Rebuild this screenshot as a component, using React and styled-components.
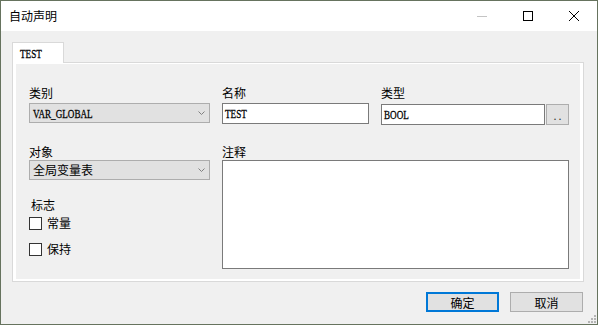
import styled, { createGlobalStyle } from 'styled-components';

const GlobalStyle = createGlobalStyle`
  html, body {
    margin: 0;
    padding: 0;
    background: #fff;
  }
  body {
    font-family: "Noto Sans CJK SC", "Liberation Sans", sans-serif;
    font-size: 12px;
    color: #000;
  }
`;

// SimSun-like narrow serif latin
const Latin = styled.span`
  display: inline-block;
  font-family: "Liberation Serif", serif;
  font-size: 12px;
  color: #000;
  -webkit-text-stroke: 0.3px #000;
  transform: scaleX(0.76);
  transform-origin: left center;
  white-space: nowrap;
`;

const Window = styled.div`
  position: relative;
  width: 598px;
  height: 325px;
  box-sizing: border-box;
  border: 1px solid #66735e;
  display: flex;
  flex-direction: column;
  background: #f0f0f0;
`;

const TitleBar = styled.div`
  height: 30px;
  flex-shrink: 0;
  background: #fff;
  display: flex;
  align-items: center;
  padding-left: 8px;
`;

const Title = styled.span`
  flex: 1;
  font-size: 12px;
  line-height: 16px;
`;

const WinButton = styled.div`
  width: 46px;
  height: 30px;
  display: flex;
  align-items: center;
  justify-content: center;
`;

const Body = styled.div`
  flex: 1;
  display: flex;
  flex-direction: column;
  padding: 11px 13px 0 11px;
`;

const TabStrip = styled.div`
  display: flex;
`;

const Tab = styled.div`
  position: relative;
  z-index: 1;
  width: 52px;
  height: 21px;
  margin-bottom: -1px;
  box-sizing: border-box;
  background: #fff;
  border: 1px solid #d9d9d9;
  border-bottom: none;
  padding-left: 7px;
  line-height: 19px;
`;

const Panel = styled.div`
  height: 220px;
  box-sizing: border-box;
  border: 1px solid #d9d9d9;
  background: #fff;
  padding: 1px 3px 2px 3px;
`;

const PanelInner = styled.div`
  height: 100%;
  box-sizing: border-box;
  background: #f0f0f0;
  padding: 21px 0 0 13px;
  display: grid;
  grid-template-columns: 181px 147px 188px;
  grid-template-rows: auto 1fr;
  column-gap: 12px;
  row-gap: 19px;
  align-items: start;
`;

const Field = styled.div`
  display: flex;
  flex-direction: column;
  grid-column: ${p => p.$span ? `span ${p.$span}` : 'auto'};
`;

const Label = styled.div`
  line-height: 16px;
  margin-top: ${p => p.$top || 0}px;
  margin-bottom: ${p => p.$gap ?? 2}px;
  padding-left: ${p => p.$indent || 0}px;
`;

const Combo = styled.div`
  height: 20px;
  box-sizing: border-box;
  background: #e1e1e1;
  border: 1px solid #adadad;
  display: flex;
  align-items: center;
  padding: 0 4px 0 3px;
  font-size: 12px;
  line-height: 18px;
  & > span:first-child { flex: 1; }
`;

const TextBox = styled.div`
  flex: 1;
  height: ${p => p.$tall ? 21 : 20}px;
  box-sizing: border-box;
  background: #fff;
  border: 1px solid #7a7a7a;
  padding-left: 2px;
  line-height: 18px;
`;

const InputRow = styled.div`
  display: flex;
  gap: 1px;
  margin-top: 1px;
`;

const DotsButton = styled.div`
  width: 23px;
  height: 21px;
  box-sizing: border-box;
  background: #e1e1e1;
  border: 1px solid #adadad;
  font-family: "Liberation Serif", serif;
  font-size: 12px;
  letter-spacing: 2px;
  padding-left: 2px;
  line-height: 22px;
  text-align: center;
  color: #333;
`;

const TextArea = styled.div`
  height: 109px;
  box-sizing: border-box;
  background: #fff;
  border: 1px solid #7a7a7a;
`;

const Column = styled.div`
  display: flex;
  flex-direction: column;
`;

const CheckRow = styled.div`
  display: flex;
  align-items: center;
  gap: 5px;
  height: 16px;
  line-height: 16px;
  margin-top: ${p => p.$top}px;
`;

const CheckBox = styled.div`
  width: 13px;
  height: 13px;
  box-sizing: border-box;
  border: 1px solid #333;
  background: #fff;
`;

const Footer = styled.div`
  display: flex;
  justify-content: flex-end;
  gap: 11px;
  margin-top: 10px;
  padding-right: 1px;
`;

const Button = styled.div`
  width: 73px;
  height: 20px;
  box-sizing: border-box;
  background: #e1e1e1;
  border: ${p => p.$primary ? '2px solid #0078d7' : '1px solid #adadad'};
  display: flex;
  align-items: center;
  justify-content: center;
  font-size: 12px;
`;

const Grip = styled.svg`
  position: absolute;
  right: 1px;
  bottom: 1px;
`;

const Chevron = () => (
  <svg width="7" height="4" viewBox="0 0 7 4">
    <path d="M0.5 0.5 L3.5 3.5 L6.5 0.5" fill="none" stroke="#808080" strokeWidth="1" />
  </svg>
);

export default function App() {
  return (
    <>
      <GlobalStyle />
      <Window>
        <TitleBar>
          <Title>自动声明</Title>
          <WinButton>
            <svg width="10" height="10" viewBox="0 0 10 10">
              <path d="M0 5.5 H10" stroke="#c4c4c4" strokeWidth="1" />
            </svg>
          </WinButton>
          <WinButton>
            <svg width="10" height="10" viewBox="0 0 10 10">
              <rect x="0.5" y="0.5" width="9" height="9" fill="none" stroke="#000" strokeWidth="1" />
            </svg>
          </WinButton>
          <WinButton>
            <svg width="10" height="10" viewBox="0 0 10 10">
              <path d="M0 0 L10 10 M10 0 L0 10" stroke="#000" strokeWidth="1" />
            </svg>
          </WinButton>
        </TitleBar>
        <Body>
          <TabStrip>
            <Tab><Latin>TEST</Latin></Tab>
          </TabStrip>
          <Panel>
            <PanelInner>
              <Field>
                <Label>类别</Label>
                <Combo>
                  <span><Latin>VAR_GLOBAL</Latin></span>
                  <Chevron />
                </Combo>
              </Field>
              <Field>
                <Label>名称</Label>
                <TextBox><Latin>TEST</Latin></TextBox>
              </Field>
              <Field>
                <Label>类型</Label>
                <InputRow>
                  <TextBox $tall><Latin>BOOL</Latin></TextBox>
                  <DotsButton>..</DotsButton>
                </InputRow>
              </Field>

              <Column>
                <Field>
                  <Label $gap={0}>对象</Label>
                  <Combo>
                    <span>全局变量表</span>
                    <Chevron />
                  </Combo>
                </Field>
                <Label $gap={0} $indent={2} $top={17}>标志</Label>
                <CheckRow $top={2}>
                  <CheckBox />
                  常量
                </CheckRow>
                <CheckRow $top={10}>
                  <CheckBox />
                  保持
                </CheckRow>
              </Column>
              <Field $span={2}>
                <Label $gap={0}>注释</Label>
                <TextArea />
              </Field>
            </PanelInner>
          </Panel>
          <Footer>
            <Button $primary>确定</Button>
            <Button>取消</Button>
          </Footer>
        </Body>
        <Grip width="8" height="8" viewBox="0 0 8 8">
          <g fill="#b4b4b4">
            <rect x="6" y="0" width="2" height="2" />
            <rect x="3" y="3" width="2" height="2" />
            <rect x="6" y="3" width="2" height="2" />
            <rect x="0" y="6" width="2" height="2" />
            <rect x="3" y="6" width="2" height="2" />
            <rect x="6" y="6" width="2" height="2" />
          </g>
        </Grip>
      </Window>
    </>
  );
}
